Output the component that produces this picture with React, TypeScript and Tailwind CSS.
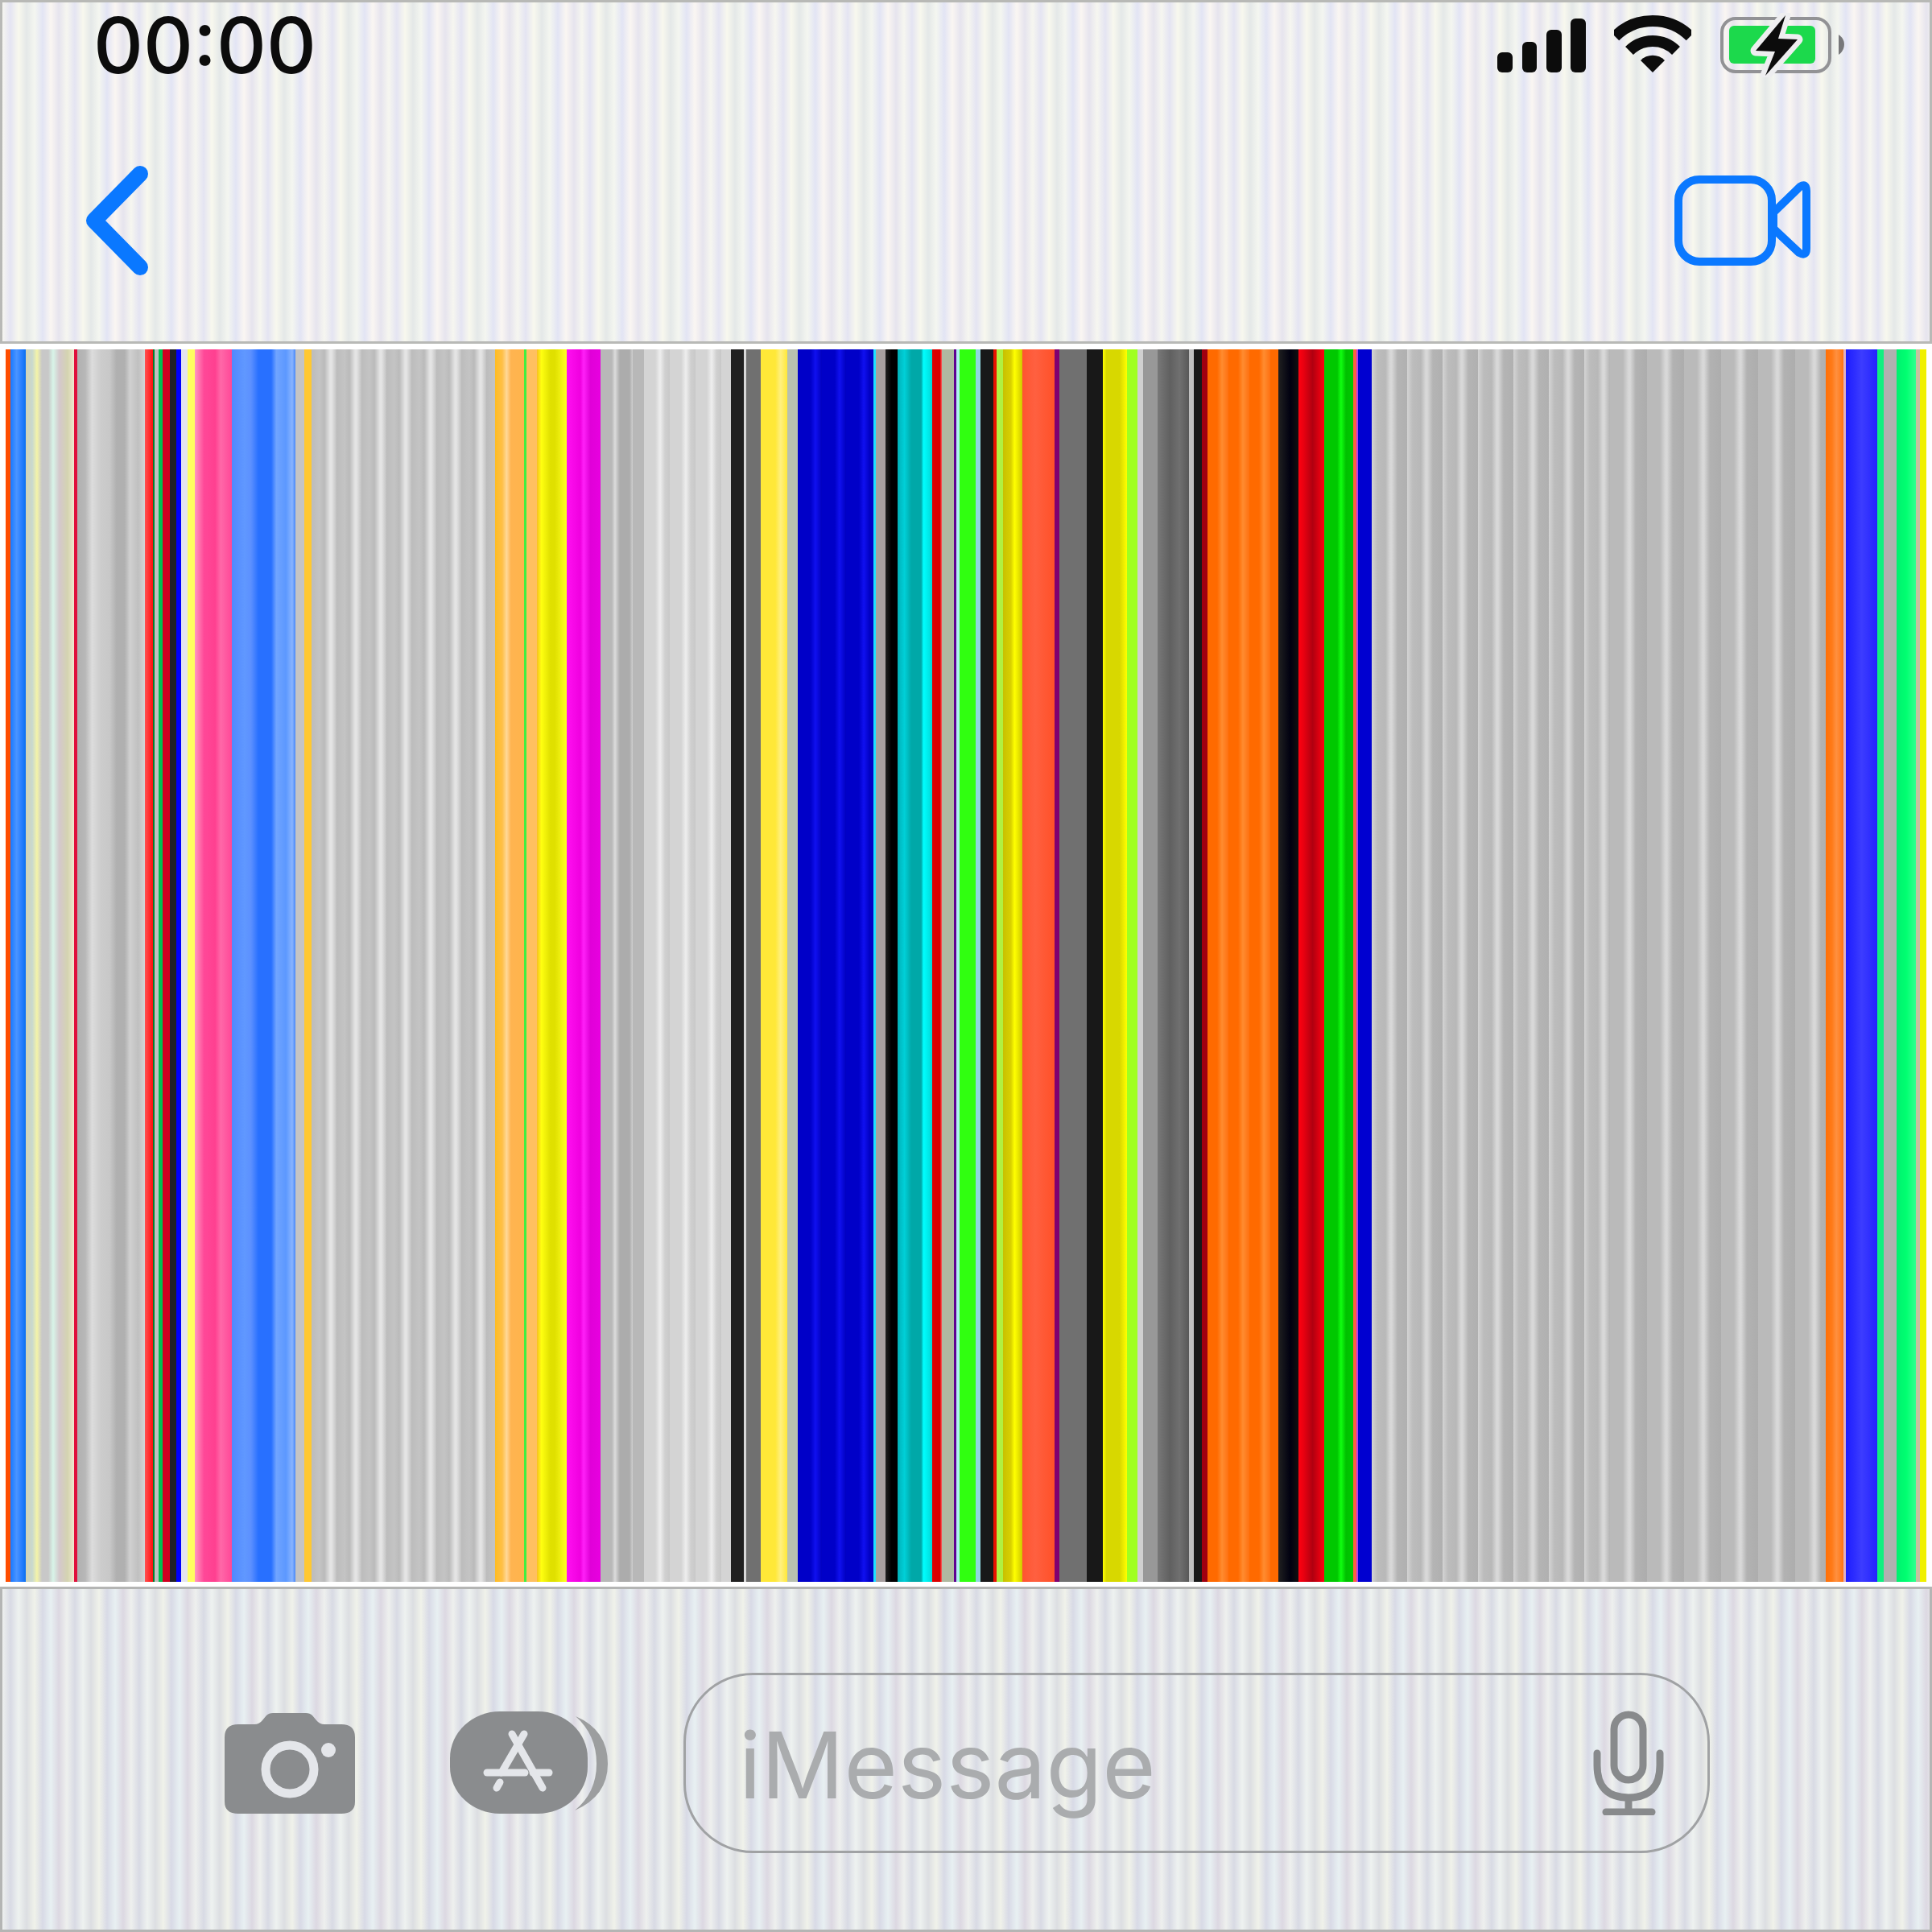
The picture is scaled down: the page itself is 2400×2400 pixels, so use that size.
import React from 'react';

const FONT = "font-['Inter','Liberation_Sans',sans-serif]";

const TOP_BG =
  'bg-[repeating-linear-gradient(90deg,#f6f6f0_0px,#e4e4f2_10px,#f8f8ee_20px,#e4e8e8_30px,#f4f6f0_40px,#e2e4f4_50px,#faf6f2_60px,#e6e4ee_70px,#f6f6f0_80px)]';
const BOTTOM_BG =
  'bg-[repeating-linear-gradient(90deg,#eef0ee_0px,#d8dae4_10px,#eef2f0_20px,#dcdee2_30px,#f0f2ea_40px,#d8dae6_50px,#e8f0f2_60px,#dcd8e2_70px,#eef0ee_80px)]';

// one entry per band of the stripe area, left to right
const STRIPES = [
  'w-[6px] bg-[#ff4d00]',
  'w-[19px] bg-[linear-gradient(90deg,#1878ff,#4a94ff_40%,#2a80ff_70%,#0c70f0)]',
  'w-[60px] bg-[repeating-linear-gradient(90deg,#d4d4b4_0px,#c8d8d0_8px,#f4f4a8_14px,#c8c8c8_20px,#c8c8c8_28px,#d8f4e8_34px,#d4c8cc_42px,#d4d4b0_52px,#f0e8d0_60px)]',
  'w-[4px] bg-[#e0103c]',
  'w-[84px] bg-[linear-gradient(90deg,#b0b0b0,#b8b8b8_12%,#dcdcdc_22%,#cccccc_35%,#c8c8c8_48%,#b0b0b0_58%,#b0b0b0_70%,#d0d0d0_78%,#c0c0c0_90%,#d4d4d4)]',
  'w-[10px] bg-[linear-gradient(90deg,#ff5050,#ff1010)]',
  'w-[2px] bg-[#008030]',
  'w-[5px] bg-[#c0c0c0]',
  'w-[5px] bg-[#00c050]',
  'w-[9px] bg-[#d00020]',
  'w-[8px] bg-[#202028]',
  'w-[6px] bg-[#0000ff]',
  'w-[8px] bg-[#e4e4f0]',
  'w-[9px] bg-[#ffff60]',
  'w-[46px] bg-[linear-gradient(90deg,#ff98c0,#ff4898_25%,#ff4090_55%,#ff68a8_70%,#ff4898)]',
  'w-[79px] bg-[linear-gradient(90deg,#5088ff,#6098ff_20%,#5c90ff_30%,#2870ff_42%,#2870ff_62%,#70a4ff_70%,#5c98ff_85%,#88b4ff_95%,#4888f8)]',
  'w-[11px] bg-[#c4c4c4]',
  'w-[9px] bg-[#ffc830]',
  'w-[228px] bg-[repeating-linear-gradient(90deg,#bcbcbc_0px,#c4c4c4_10px,#bababa_16px,#e4e4e4_23px,#e4e4e4_25px,#c2c2c2_31px)]',
  'w-[36px] bg-[linear-gradient(90deg,#ffbc20,#ffc048_25%,#ffd898_40%,#ffb450_55%,#ffb44c)]',
  'w-[3px] bg-[#40f040]',
  'w-[13px] bg-[#ffc060]',
  'w-[37px] bg-[linear-gradient(90deg,#f8c020,#ffff10_15%,#e0e000_45%,#e0e000_60%,#ffff20)]',
  'w-[42px] bg-[linear-gradient(90deg,#ff10f0,#f000e0_40%,#ff20f8_50%,#e000d8_70%,#e800e0)]',
  'w-[54px] bg-[repeating-linear-gradient(90deg,#b8b8b8_0px,#b8b8b8_14px,#dcdcdc_18px,#acacac_24px,#acacac_36px,#d0d0d0_40px)]',
  'w-[108px] bg-[repeating-linear-gradient(90deg,#d4d4d4_0px,#d4d4d4_14px,#eeeeee_20px,#d0d0d0_26px,#c8c8c8_32px)]',
  'w-[16px] bg-[#202020]',
  'w-[3px] bg-[#d8d8d8]',
  'w-[18px] bg-[#707070]',
  'w-[33px] bg-[linear-gradient(90deg,#ffe838,#ffe838_55%,#fff080_75%,#ffe838)]',
  'w-[13px] bg-[#b8c0b0]',
  'w-[94px] bg-[repeating-linear-gradient(90deg,#0000c8_0px,#0000c8_16px,#1010f0_22px,#0000c0_30px)]',
  'w-[3px] bg-[#20e0ff]',
  'w-[12px] bg-[#a8a0a0]',
  'w-[15px] bg-[linear-gradient(90deg,#202020,#000000_50%)]',
  'w-[43px] bg-[linear-gradient(90deg,#00b0b8,#00d0d8_20%,#00a8a8_40%,#00a8a8_68%,#00ffff_75%,#00d8d8)]',
  'w-[12px] bg-[linear-gradient(90deg,#e00000,#d80000_80%,#ff6060)]',
  'w-[15px] bg-[#b0b8a0]',
  'w-[3px] bg-[#600090]',
  'w-[4px] bg-[#b0f0f0]',
  'w-[20px] bg-[#30ff10]',
  'w-[6px] bg-[#90d8e0]',
  'w-[16px] bg-[#181818]',
  'w-[4px] bg-[#e81000]',
  'w-[8px] bg-[#b0f040]',
  'w-[24px] bg-[linear-gradient(90deg,#c8c000,#d8d000_40%,#ffff00_60%,#d0c800)]',
  'w-[40px] bg-[linear-gradient(90deg,#ff5430,#ff6040_40%,#ff5028)]',
  'w-[6px] bg-[#800070]',
  'w-[34px] bg-[#707070]',
  'w-[20px] bg-[#181818]',
  'w-[30px] bg-[linear-gradient(90deg,#ffff00,#d8d800_15%,#d8d800_70%,#ffff00)]',
  'w-[13px] bg-[#a0ff20]',
  'w-[7px] bg-[#d0d0d0]',
  'w-[18px] bg-[#989898]',
  'w-[39px] bg-[linear-gradient(90deg,#787878,#606060_40%,#707070_70%,#585858)]',
  'w-[6px] bg-[#c0c0c0]',
  'w-[10px] bg-[#181818]',
  'w-[7px] bg-[#a00010]',
  'w-[88px] bg-[repeating-linear-gradient(90deg,#ff6a00_0px,#ff6a00_12px,#ff8c30_18px,#ff7010_26px)]',
  'w-[25px] bg-[linear-gradient(90deg,#202020,#000010_60%,#101010)]',
  'w-[32px] bg-[linear-gradient(90deg,#ff0010,#e80010_20%,#b00010_55%,#ff0010)]',
  'w-[36px] bg-[linear-gradient(90deg,#00c800,#00c800_45%,#10ff10_58%,#00c000_75%,#00c800)]',
  'w-[4px] bg-[#ff6040]',
  'w-[2px] bg-[#c040e0]',
  'w-[17px] bg-[#0000d0]',
  'w-[296px] bg-[repeating-linear-gradient(90deg,#d4d4d4_0px,#bcbcbc_7px,#b8b8b8_17px,#d8d8d8_23px,#d8d8d8_25px,#b4b4b4_32px,#b0b0b0_44px)]',
  'w-[268px] bg-[repeating-linear-gradient(90deg,#bababa_0px,#bababa_16px,#d8d8d8_23px,#d8d8d8_25px,#b2b2b2_32px,#adadad_46px)]',
  'w-[22px] bg-[linear-gradient(90deg,#ff7008,#ff7a18_35%,#ff9040_60%,#ff7410)]',
  'w-[3px] bg-[#e0b0c0]',
  'w-[39px] bg-[linear-gradient(90deg,#1c1cff,#3c3cff_50%,#2424ff)]',
  'w-[8px] bg-[#10f080]',
  'w-[16px] bg-[#b0b0b0]',
  'w-[24px] bg-[linear-gradient(90deg,#00f070,#00ff70_50%,#30ff90)]',
  'w-[5px] bg-[#c8c0a0]',
  'w-[8px] bg-[#f0f000]',
];

function SignalIcon() {
  return (
    <svg viewBox="1861 16 110 80" className="w-[110px] h-[80px]" fill="#0c0c0c">
      <rect x="1861" y="65" width="19" height="25" rx="6" />
      <rect x="1892" y="52" width="18" height="38" rx="6" />
      <rect x="1922" y="37" width="19" height="53" rx="6" />
      <rect x="1952" y="23" width="19" height="67" rx="6" />
    </svg>
  );
}

function WifiIcon() {
  return (
    <svg viewBox="2005 16 96 80" className="w-[96px] h-[80px]" fill="none" stroke="#0c0c0c" strokeWidth="14">
      <path d="M2006.3 45.3 A66 66 0 0 1 2099.7 45.3" />
      <path d="M2024 63 A41 41 0 0 1 2082 63" />
      <path d="M2053 90 L2038 75 A21 21 0 0 1 2068 75 Z" fill="#0c0c0c" stroke="none" />
    </svg>
  );
}

function BatteryIcon() {
  return (
    <svg viewBox="2137 16 154 80" className="w-[154px] h-[80px]">
      <rect x="2139" y="23" width="134" height="66" rx="17" fill="none" stroke="#929295" strokeWidth="4" />
      <rect x="2148" y="32" width="107" height="47" rx="6" fill="#1cd94c" />
      <path d="M2284 43 Q2291 48 2291 55 Q2291 63 2284 68 Z" fill="#77777a" />
      <path
        d="M2218 19 L2181 63 L2205 64 L2193 94 L2233 49 L2209 48 Z"
        fill="#0c0c0c"
        stroke="#eeeef0"
        strokeWidth="13"
        strokeLinejoin="round"
        paintOrder="stroke"
      />
    </svg>
  );
}

function BackIcon() {
  return (
    <svg viewBox="100 200 90 150" className="w-[90px] h-[150px]" fill="none" stroke="#0a78ff" strokeWidth="20" strokeLinecap="round" strokeLinejoin="round">
      <path d="M174 217 L117 275 L174 333" />
    </svg>
  );
}

function VideoIcon() {
  return (
    <svg viewBox="2078 215 174 116" className="w-[174px] h-[116px]" fill="none" stroke="#0a78ff" strokeWidth="10" strokeLinejoin="round">
      <rect x="2085" y="222" width="116" height="102" rx="26" />
      <path d="M2203 263 L2236 231 Q2244 226 2244 236 L2244 308 Q2244 318 2235 313 L2203 283 Z" />
    </svg>
  );
}

function CameraIcon() {
  return (
    <svg viewBox="279 2128 162 125" className="w-[162px] h-[125px]">
      <path
        d="M296 2142 L316 2142 Q322 2142 326 2137 L331 2131 Q334 2128 339 2128 L380 2128 Q385 2128 388 2131 L393 2137 Q397 2142 403 2142 L424 2142 Q441 2142 441 2158 L441 2238 Q441 2253 424 2253 L296 2253 Q279 2253 279 2238 L279 2158 Q279 2142 296 2142 Z"
        fill="#8a8c8e"
      />
      <circle cx="360" cy="2198" r="30" fill="none" stroke="#e4e6ea" strokeWidth="11" />
      <circle cx="408" cy="2174" r="9" fill="#e4e6ea" />
    </svg>
  );
}

function AppsIcon() {
  return (
    <svg viewBox="559 2126 196 130" className="w-[196px] h-[130px]">
      <rect x="559" y="2127" width="171" height="127" rx="62" ry="58" fill="#8a8c8e" />
      <path d="M715 2133 Q755 2150 755 2192 Q755 2232 714 2250 Q741 2228 741 2192 Q741 2156 715 2133 Z" fill="#9c9e9f" />
      <g fill="none" stroke="#e4e6ea" strokeWidth="9" strokeLinecap="round">
        <path d="M651 2155 L623 2203" />
        <path d="M636 2155 L674 2222" />
        <path d="M605 2203 L652 2203" />
        <path d="M662 2203 L682 2203" />
        <path d="M617 2222 L621 2215" />
      </g>
    </svg>
  );
}

function MicIcon() {
  return (
    <svg viewBox="1978 2124 90 130" className="w-[90px] h-[130px]" fill="none" stroke="#888a8c" strokeWidth="9" strokeLinecap="round">
      <rect x="2005" y="2129" width="36" height="81" rx="18" />
      <path d="M1984 2177 L1984 2192 Q1984 2232 2023 2232 Q2062 2232 2062 2192 L2062 2177" />
      <path d="M2023 2232 L2023 2250" strokeLinecap="butt" />
      <path d="M1995 2250 L2052 2250" />
    </svg>
  );
}

export default function App() {
  return (
    <div className={`w-[2400px] h-[2400px] bg-white flex flex-col ${FONT}`}>
      {/* Status + nav bar */}
      <header className={`h-[427px] shrink-0 border-[3px] border-[#b8b9b6] ${TOP_BG} flex flex-col`}>
        <div className="h-[110px] pt-[13px] pl-[113px] pr-[106px] flex justify-between items-start">
          <span className="text-[96px] leading-[80px] font-medium text-[#0c0c0c]">00:00</span>
          <div className="flex">
            <SignalIcon />
            <div className="ml-[35px]">
              <WifiIcon />
            </div>
            <div className="ml-[36px]">
              <BatteryIcon />
            </div>
          </div>
        </div>
        <div className="pt-[87px] pl-[97px] pr-[145px] flex justify-between items-center h-[234px]">
          <BackIcon />
          <VideoIcon />
        </div>
      </header>

      {/* Stripes */}
      <div className="h-[1531px] mt-[7px] shrink-0 pl-[7px] flex">
        {STRIPES.map((cls, i) => (
          <div key={i} className={`shrink-0 h-full ${cls}`} />
        ))}
      </div>

      {/* Input bar */}
      <footer className={`mt-[6px] flex-1 border-[3px] border-[#b4b5b4] ${BOTTOM_BG} pt-[104px] pl-[276px]`}>
        <div className="flex items-center">
          <CameraIcon />
          <div className="ml-[118px]">
            <AppsIcon />
          </div>
          <div className="ml-[94px] w-[1275px] h-[224px] rounded-[86px] border-[3px] border-[#a0a2a4] flex items-center justify-between pl-[66px] pr-[53px]">
            <span className="text-[114px] leading-none font-normal text-[#aaacae] translate-y-[3px]">iMessage</span>
            <MicIcon />
          </div>
        </div>
      </footer>
    </div>
  );
}
